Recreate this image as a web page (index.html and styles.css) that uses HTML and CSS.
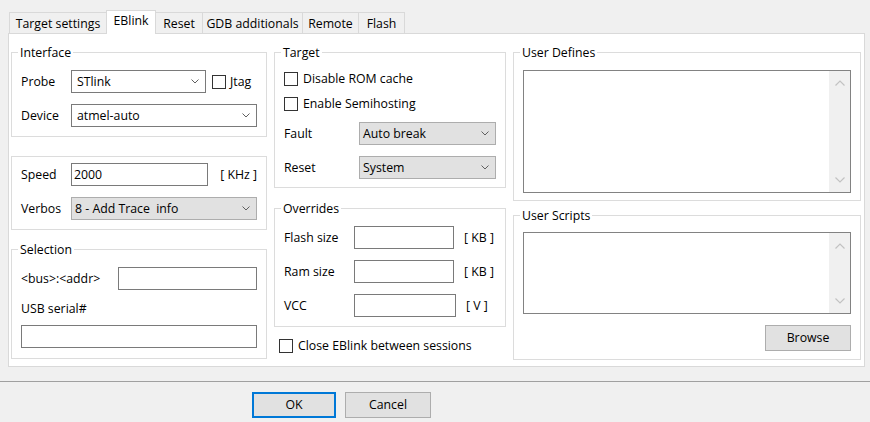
FILE: index.html
```html
<!DOCTYPE html>
<html>
<head>
<meta charset="utf-8">
<link rel="stylesheet" href="styles.css">
</head>
<body>
<div class="tabs">
  <div class="tab w97">Target settings</div>
  <div class="tab sel w50">EBlink</div>
  <div class="tab nol w46">Reset</div>
  <div class="tab w100">GDB additionals</div>
  <div class="tab w56">Remote</div>
  <div class="tab last w47">Flash</div>
</div>
<div class="panel">
  <div class="col col1">
    <fieldset class="grp g-interface">
      <legend>Interface</legend>
      <div class="row">
        <span class="lbl lw50">Probe</span>
        <div class="combo white cw135"><span>STlink</span><svg class="chev" width="8" height="5" viewBox="0 0 8 5"><polyline points="0.5,0.5 4,4 7.5,0.5"/></svg></div>
        <span class="chk ml6"></span><span class="ml4">Jtag</span>
      </div>
      <div class="row mt11">
        <span class="lbl lw50">Device</span>
        <div class="combo white cw186"><span>atmel-auto</span><svg class="chev" width="8" height="5" viewBox="0 0 8 5"><polyline points="0.5,0.5 4,4 7.5,0.5"/></svg></div>
      </div>
    </fieldset>
    <fieldset class="grp g-speed">
      <div class="row">
        <span class="lbl lw50">Speed</span>
        <div class="input iw137">2000</div>
        <span class="unit-r">[ KHz ]</span>
      </div>
      <div class="row mt11">
        <span class="lbl lw50">Verbos</span>
        <div class="combo grey cw186"><span class="pre">8 - Add Trace  info</span><svg class="chev" width="8" height="5" viewBox="0 0 8 5"><polyline points="0.5,0.5 4,4 7.5,0.5"/></svg></div>
      </div>
    </fieldset>
    <fieldset class="grp g-sel">
      <legend>Selection</legend>
      <div class="row">
        <span class="lbl lw97">&lt;bus&gt;:&lt;addr&gt;</span>
        <div class="input iw139"></div>
      </div>
      <div class="plain mt11">USB serial#</div>
      <div class="input iw236 mt8"></div>
    </fieldset>
  </div>
  <div class="col col2">
    <fieldset class="grp g-target">
      <legend>Target</legend>
      <div class="crow"><span class="chk"></span><span class="ml5">Disable ROM cache</span></div>
      <div class="crow mt9"><span class="chk"></span><span class="ml5">Enable Semihosting</span></div>
      <div class="row mt10">
        <span class="lbl lw75">Fault</span>
        <div class="combo grey cw137"><span>Auto break</span><svg class="chev" width="8" height="5" viewBox="0 0 8 5"><polyline points="0.5,0.5 4,4 7.5,0.5"/></svg></div>
      </div>
      <div class="row mt11">
        <span class="lbl lw75">Reset</span>
        <div class="combo grey cw137"><span>System</span><svg class="chev" width="8" height="5" viewBox="0 0 8 5"><polyline points="0.5,0.5 4,4 7.5,0.5"/></svg></div>
      </div>
    </fieldset>
    <fieldset class="grp g-over">
      <legend>Overrides</legend>
      <div class="row">
        <span class="lbl lw70">Flash size</span>
        <div class="input iw100"></div>
        <span class="ml10">[ KB ]</span>
      </div>
      <div class="row mt11">
        <span class="lbl lw70">Ram size</span>
        <div class="input iw100"></div>
        <span class="ml10">[ KB ]</span>
      </div>
      <div class="row mt11">
        <span class="lbl lw70">VCC</span>
        <div class="input iw102"></div>
        <span class="ml10">[ V ]</span>
      </div>
    </fieldset>
    <div class="crow close-row"><span class="chk"></span><span class="ml5">Close EBlink between sessions</span></div>
  </div>
  <div class="col col3">
    <fieldset class="grp g-ud">
      <legend>User Defines</legend>
      <div class="ta ta-ud">
        <div class="sb">
          <svg width="10" height="6" viewBox="0 0 10 6"><polyline points="0.5,5.5 5,1 9.5,5.5"/></svg>
          <svg width="10" height="6" viewBox="0 0 10 6"><polyline points="0.5,0.5 5,5 9.5,0.5"/></svg>
        </div>
      </div>
    </fieldset>
    <fieldset class="grp g-us">
      <legend>User Scripts</legend>
      <div class="ta ta-us">
        <div class="sb">
          <svg width="10" height="6" viewBox="0 0 10 6"><polyline points="0.5,5.5 5,1 9.5,5.5"/></svg>
          <svg width="10" height="6" viewBox="0 0 10 6"><polyline points="0.5,0.5 5,5 9.5,0.5"/></svg>
        </div>
      </div>
      <div class="btnrow"><div class="btn browse">Browse</div></div>
    </fieldset>
  </div>
</div>
<div class="sep"></div>
<div class="buttons">
  <div class="btn ok">OK</div>
  <div class="btn cancel">Cancel</div>
</div>
</body>
</html>
```
FILE: styles.css
```css
body {
  margin: 0;
  width: 870px;
  height: 422px;
  overflow: hidden;
  background: #f0f0f0;
  font-family: "Open Sans", "Noto Sans", sans-serif;
  font-size: 12.3px;
  line-height: 16px;
  color: #000;
}

/* tabs */
.tabs {
  display: flex;
  align-items: flex-end;
  height: 23px;
  padding: 10px 0 0 9px;
}
.tab {
  box-sizing: border-box;
  height: 21px;
  border-top: 1px solid #d9d9d9;
  border-left: 1px solid #d9d9d9;
  background: #f0f0f0;
  text-align: center;
  padding-top: 3px;
  white-space: nowrap;
}
.tab.sel {
  height: 24px;
  margin-bottom: -1px;
  background: #fff;
  border-right: 1px solid #d9d9d9;
  padding-top: 2px;
  position: relative;
  z-index: 1;
}
.tab.nol { border-left: none; }
.tab.last { border-right: 1px solid #d9d9d9; }
.w97 { width: 97px; }
.w50 { width: 50px; }
.w46 { width: 46px; }
.w100 { width: 100px; }
.w56 { width: 56px; }
.w47 { width: 47px; }

/* panel */
.panel {
  box-sizing: border-box;
  margin-left: 8px;
  width: 857px;
  height: 334px;
  border: 1px solid #d9d9d9;
  background: #fff;
  display: flex;
  gap: 7px;
  padding: 11px 3px 0 2px;
}
.col { display: flex; flex-direction: column; }
.col1 { width: 256px; }
.col2 { width: 232px; }
.col3 { width: 348px; }

.grp {
  box-sizing: border-box;
  margin: 0;
  min-width: 0;
  border: 1px solid #dcdcdc;
  padding: 0 9px;
  flex: none;
}
.grp legend {
  padding: 0 2px;
  margin-left: -3px;
  line-height: 15px;
  height: 15px;
}
.grp.g-interface { height: 92px; padding-top: 10px; }
.grp.g-speed { height: 74px; margin-top: 19px; padding-top: 6px; }
.grp.g-sel { height: 117px; margin-top: 12px; padding-top: 10px; }
.grp.g-target { height: 143px; padding-top: 11px; }
.grp.g-over { height: 126px; margin-top: 13px; padding-top: 10px; }
.grp.g-ud { height: 156px; padding-top: 10px; }
.grp.g-us { height: 152px; margin-top: 7px; padding-top: 9px; }

.row { display: flex; align-items: center; height: 23px; }
.crow { display: flex; align-items: center; height: 16px; }
.close-row { margin-top: 11px; margin-left: 5px; }
.lbl { flex: none; white-space: nowrap; }
.lw50 { width: 50px; }
.lw70 { width: 70px; }
.lw75 { width: 75px; }
.lw97 { width: 97px; }
.mt8 { margin-top: 8px; }
.mt9 { margin-top: 9px; }
.mt10 { margin-top: 10px; }
.mt11 { margin-top: 11px; }
.ml4 { margin-left: 4px; }
.ml5 { margin-left: 5px; }
.ml6 { margin-left: 6px; }
.ml10 { margin-left: 10px; }
.plain { height: 16px; white-space: nowrap; }
.pre { white-space: pre; }

.combo {
  box-sizing: border-box;
  height: 23px;
  display: flex;
  align-items: center;
  justify-content: space-between;
  white-space: nowrap;
}
.combo.white { background: #fff; border: 1px solid #7a7a7a; padding: 0 6px 0 5px; }
.combo.grey { background: #e1e1e1; border: 1px solid #adadad; padding: 0 6px 0 3px; }
.chev { flex: none; }
.chev polyline { fill: none; stroke: #606060; stroke-width: 1; }
.cw135 { width: 135px; }
.cw137 { width: 137px; }
.cw186 { width: 186px; }

.input {
  box-sizing: border-box;
  height: 23px;
  background: #fff;
  border: 1px solid #7a7a7a;
  padding: 0 2px;
  display: flex;
  align-items: center;
}
.iw100 { width: 100px; }
.iw102 { width: 102px; }
.iw137 { width: 137px; }
.iw139 { width: 139px; }
.iw236 { width: 236px; }
.unit-r { margin-left: auto; white-space: nowrap; }

.chk {
  box-sizing: border-box;
  flex: none;
  width: 14px;
  height: 14px;
  border: 1px solid #333;
  background: #fff;
}

.ta {
  box-sizing: border-box;
  width: 328px;
  border: 1px solid #828282;
  background: #fff;
  display: flex;
  justify-content: flex-end;
}
.ta-ud { height: 123px; }
.ta-us { height: 82px; }
.sb {
  width: 21px;
  background: #f0f0f0;
  display: flex;
  flex-direction: column;
  justify-content: space-between;
  align-items: center;
  padding: 9px 0 9px;
  box-sizing: border-box;
}
.ta-us .sb { padding: 10px 0 9px; }
.sb polyline { fill: none; stroke: #c2c2c2; stroke-width: 1.2; }

.btnrow { display: flex; justify-content: flex-end; margin-top: 11px; }
.btn {
  box-sizing: border-box;
  height: 26px;
  display: flex;
  align-items: center;
  justify-content: center;
  background: #e1e1e1;
  border: 1px solid #adadad;
}
.browse { width: 86px; }

.sep { height: 1px; background: #a0a0a0; margin-top: 14px; }
.buttons { display: flex; gap: 9px; padding-left: 252px; margin-top: 10px; }
.ok { width: 84px; border: 2px solid #0078d7; }
.cancel { width: 86px; }
```
